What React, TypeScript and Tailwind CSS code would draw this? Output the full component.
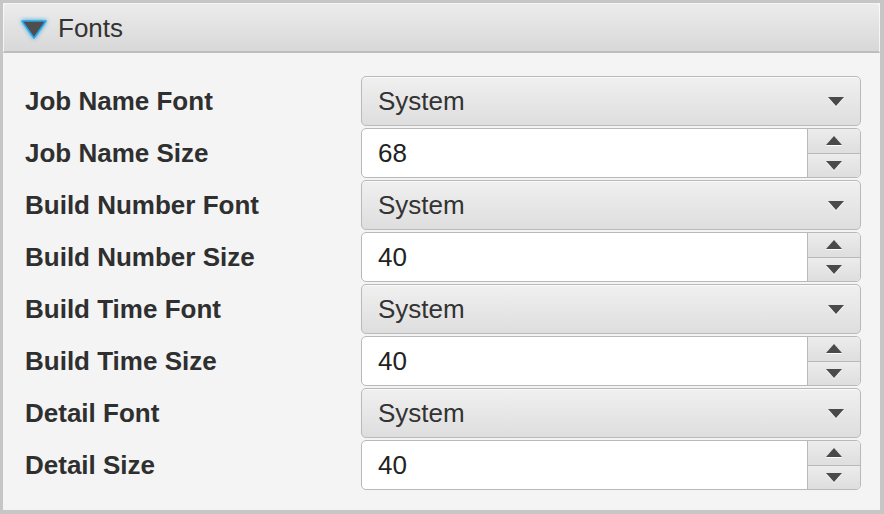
import type { ReactNode } from 'react';

const font = { fontFamily: '"Liberation Sans", Arial, sans-serif' };

type Row = { label: string; kind: 'combo' | 'spin'; value: string };

const rows: Row[] = [
  { label: 'Job Name Font', kind: 'combo', value: 'System' },
  { label: 'Job Name Size', kind: 'spin', value: '68' },
  { label: 'Build Number Font', kind: 'combo', value: 'System' },
  { label: 'Build Number Size', kind: 'spin', value: '40' },
  { label: 'Build Time Font', kind: 'combo', value: 'System' },
  { label: 'Build Time Size', kind: 'spin', value: '40' },
  { label: 'Detail Font', kind: 'combo', value: 'System' },
  { label: 'Detail Size', kind: 'spin', value: '40' },
];

function Arrow({ up = false }: { up?: boolean }) {
  return (
    <svg width="18" height="11" viewBox="0 0 18 11" className="drop-shadow-[0_1px_0_#ffffff]">
      {up ? <path d="M1 10 L9 1 L17 10 Z" fill="#4a4a4a" /> : <path d="M1 1 L17 1 L9 10 Z" fill="#4a4a4a" />}
    </svg>
  );
}

function Combo({ value }: { value: string }) {
  return (
    <div className="h-[50px] w-[500px] rounded-[5px] border border-[#b9b9b9] bg-gradient-to-b from-[#f0f0f0] to-[#dedede] shadow-[inset_0_1px_0_#fafafa] flex items-center justify-between pl-[16px] pr-[15px]">
      <span className="text-[26px] text-[#333]">{value}</span>
      <Arrow />
    </div>
  );
}

function Spin({ value }: { value: string }) {
  return (
    <div className="h-[50px] w-[500px] rounded-[5px] border border-[#b9b9b9] bg-white flex overflow-hidden">
      <div className="flex-1 flex items-center pl-[16px] text-[26px] text-[#222]">{value}</div>
      <div className="w-[53px] flex flex-col border-l border-[#b9b9b9]">
        <div className="flex-1 flex items-center justify-center bg-gradient-to-b from-[#ececec] to-[#dedede] border-b border-[#b9b9b9]">
          <Arrow up />
        </div>
        <div className="flex-1 flex items-center justify-center bg-gradient-to-b from-[#ececec] to-[#dedede]">
          <Arrow />
        </div>
      </div>
    </div>
  );
}

function Field({ row }: { row: Row }): ReactNode {
  return (
    <div className="flex items-center h-[52px]">
      <div className="w-[336px] text-[26px] font-bold text-[#2f2f2f]">{row.label}</div>
      {row.kind === 'combo' ? <Combo value={row.value} /> : <Spin value={row.value} />}
    </div>
  );
}

export default function App() {
  return (
    <div className="w-[884px] h-[514px] bg-[#c6c6c6] p-[3px] pr-[4px] pb-[4px]" style={font}>
      <div className="h-full flex flex-col bg-[#f4f4f4]">
        {/* Header */}
        <div className="h-[50px] flex items-center rounded-t-[4px] border border-white/70 bg-gradient-to-b from-[#ececec] to-[#d8d8d8] border-b-2 border-b-[#bdbdbd] pl-[15px] pt-[2px]">
          <svg width="30" height="24" viewBox="0 0 30 24" className="drop-shadow-[0_0_2px_#1aa3ea]">
            <path d="M3 4 L27 4 L15 21 Z" fill="#4e4e4e" stroke="#29a6e6" strokeWidth="1.5" strokeLinejoin="round" />
          </svg>
          <span className="ml-[9px] text-[26px] text-[#333]">Fonts</span>
        </div>

        {/* Rows */}
        <div className="flex flex-col pt-[22px] pl-[22px]">
          {rows.map((r) => (
            <Field key={r.label} row={r} />
          ))}
        </div>
      </div>
    </div>
  );
}
